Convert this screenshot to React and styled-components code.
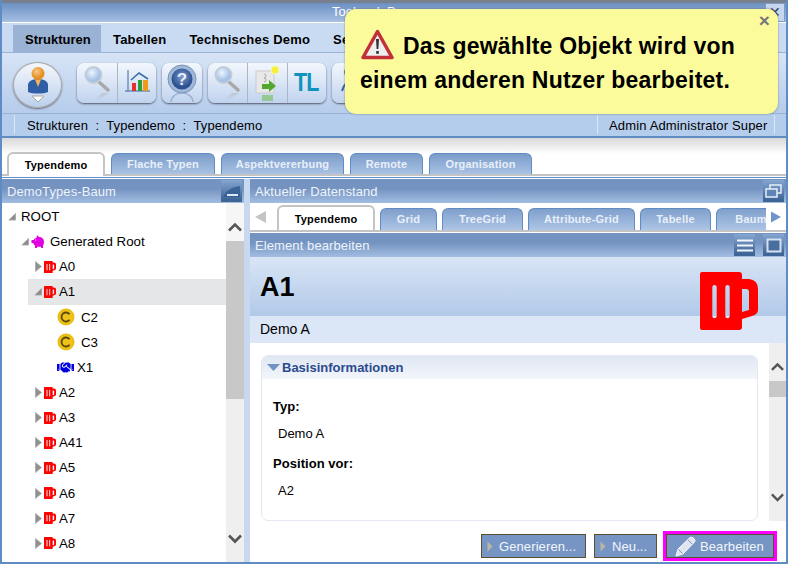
import React from 'react';
import styled, { createGlobalStyle } from 'styled-components';
import { FaHandshake } from 'react-icons/fa';

const Global = createGlobalStyle`
  html, body { margin: 0; padding: 0; background: #fff; overflow: hidden; }
  * { box-sizing: border-box; }
  body { font-family: "Liberation Sans", Arial, sans-serif; color: #000; }
`;

const Win = styled.div`
  position: relative; width: 788px; height: 564px; overflow: hidden;
  display: flex; flex-direction: column; background: #fff;
  border-left: 2px solid #5f8cc4; border-right: 2px solid #5f8cc4; border-bottom: 2px solid #5f8cc4;
`;
const TitleBar = styled.div`
  height: 22px; flex: none; border-top: 3px solid #77808c; border-bottom: 1px solid #a9c0e2;
  background: linear-gradient(#6c90c2, #a3bde2); color: #fff; font-size: 13px; line-height: 17px;
  display: flex; justify-content: space-between; padding-left: 330px;
`;
const CloseBox = styled.div`
  width: 20px; height: 19px; margin-right: 1px; background: #c5d6ee; border: 1px solid #7f9cc4;
  color: #445; font-size: 14px; text-align: center; line-height: 16px;
`;
const MenuBar = styled.div`
  height: 31px; flex: none; padding: 2px 0 0 11px; display: flex; font-size: 13px; font-weight: 700;
  background: #c9dbf3; border-top: 1px solid #fff; border-bottom: 1px solid #9ab3d6;
`;
const MenuItem = styled.div`
  height: 27px; padding: 1px 11px 0 12px; line-height: 27px; white-space: nowrap; letter-spacing: .2px;
  ${p => (p.$active ? 'width: 88px; letter-spacing: 0; background: #9ab2d4;' : '')}
`;
const Toolbar = styled.div`
  height: 61px; flex: none; display: flex; align-items: flex-start; gap: 6px; padding: 9px 0 0 11px;
  background: linear-gradient(#d7e4f6, #b5cceb); border-bottom: 1px solid #9ab3d6;
`;
const UserBtn = styled.div`
  width: 49px; height: 46px; margin-right: 9px; border-radius: 50%;
  background: linear-gradient(#f4f7fc, #bcd0ec); border: 1px solid #a8a8a8; box-shadow: 0 1px 2px #667;
  display: flex; align-items: center; justify-content: center;
`;
const BtnGroup = styled.div`
  height: 40px; margin-top: 1px; display: flex; border-radius: 7px; overflow: hidden;
  background: linear-gradient(#f3f7fd, #c0d3ee); box-shadow: 0 1px 2px 0 #556;
`;
const ToolBtn = styled.div`
  width: 39.5px; display: flex; align-items: center; justify-content: center;
  & + & { border-left: 1px solid #aab6c6; }
`;
const TL = styled.span`
  display: block; font-size: 25px; font-weight: 700; color: #0e94bd; letter-spacing: -1px; line-height: 1;
  transform: scaleX(.86); margin-top: -2px;
`;
const StatusBar = styled.div`
  height: 24px; flex: none; display: flex; font-size: 13px;
  background: #b5cdec; border-bottom: 2px solid #5f8cc4; padding-left: 12px;
`;
const Crumbs = styled.div`
  flex: 1; border-left: 1px solid #dbe6f6; padding-left: 12px; white-space: pre; letter-spacing: .1px;
  height: 19px; margin-top: 1px; line-height: 21px;
`;
const UserName = styled.div`
  width: 178px; height: 19px; margin: 1px 11px 0 0; line-height: 21px; padding-left: 11px; white-space: nowrap; letter-spacing: .15px;
  border-left: 1px solid #dbe6f6; border-right: 1px solid #dbe6f6;
`;
const TabZone = styled.div`
  height: 38px; flex: none; display: flex; align-items: flex-end; padding-left: 5px; gap: 6px;
  background: linear-gradient(#d8d8d8, #fff 16px); border-bottom: 2px solid #c4c4c4;
  margin-bottom: 2px; box-shadow: 0 1px 0 #fff, 0 2px 0 #5f8cc4;
`;
const MainTab = styled.div`
  flex: none; width: ${p => p.$w}px; height: ${p => (p.$active ? 24 : 21)}px; margin-bottom: ${p => (p.$active ? -2 : 0)}px;
  border-radius: 6px 6px 0 0; text-align: center; font-size: 11px; font-weight: 700; letter-spacing: .2px;
  line-height: ${p => (p.$active ? 22 : 20)}px; white-space: nowrap; overflow: hidden;
  ${p => (p.$active
    ? 'background:#fff;color:#000;border:2px solid #c4c4c4;border-bottom:0;'
    : 'background:linear-gradient(#7b9cc9,#a9c2e4);color:#e8eff9;border:1px solid #5f8cc4;border-bottom:0;')}
`;
const Body = styled.div`
  flex: 1; min-height: 0; display: flex; margin-top: 1px;
`;
const LeftPane = styled.div`
  width: 242px; flex: none; display: flex; flex-direction: column;
`;
const Splitter = styled.div`
  width: 6px; flex: none; background: #c8d8ee;
`;
const RightPane = styled.div`
  flex: 1; min-width: 0; display: flex; flex-direction: column;
`;
const PaneHead = styled.div`
  height: 24px; flex: none; display: flex; align-items: center; gap: 8px; padding: 0 ${p => p.$pr || 1}px 0 5px;
  color: #eef3fb; font-size: 13px; letter-spacing: .1px;
  background: linear-gradient(#7493c0 40%, #a3bde2);
`;
const HeadTitle = styled.div` flex: 1; `;
const HeadBtn = styled.div`
  width: 21px; height: 22px; display: flex; align-items: center; justify-content: center;
  background: linear-gradient(#86a6d2, #3f6596 90%);
`;
const TreeArea = styled.div`
  flex: 1; min-height: 0; display: flex; overflow: hidden; background: #fff;
`;
const Tree = styled.div`
  flex: 1; min-width: 0; padding-top: 1px; overflow: hidden;
`;
const Row = styled.div`
  height: 25.15px; margin-left: ${p => p.$level * 13}px; padding-left: 6px; display: flex; align-items: center;
  font-size: 13.3px; background: ${p => (p.$sel ? '#e5e6e8' : 'transparent')}; white-space: nowrap;
`;
const ArrowSlot = styled.div`
  width: 8px; margin-right: ${p => (p.$root ? 5 : 2)}px; flex: none; display: flex; justify-content: center;
`;
const IconSlot = styled.div`
  width: ${p => p.$w}px; flex: none; display: flex; align-items: center; height: 18px;
`;
const Scroll = styled.div`
  width: ${p => p.$w}px; flex: none; background: #efefef; display: flex; flex-direction: column; align-items: center; position: relative;
`;
const ScrollTop = styled.div`
  height: ${p => p.$h}px; width: 100%; flex: none; display: flex; justify-content: center; padding-top: ${p => p.$pt}px;
  background: ${p => p.$bg || 'transparent'};
`;
const Thumb = styled.div`
  width: 100%; height: ${p => p.$h}px; flex: none; background: #c8c8c8;
`;
const ScrollRest = styled.div`
  flex: 1; display: flex; align-items: flex-end; justify-content: center; padding-bottom: ${p => p.$pb}px;
`;
const TabStrip = styled.div`
  height: 29px; flex: none; display: flex; align-items: flex-end; overflow: hidden; position: relative;
  border-bottom: 2px solid #c4c4c4; margin-bottom: 1px; background: #fff;
`;
const ArrowBox = styled.div`
  width: ${p => p.$w}px; flex: none; height: 27px; align-self: flex-start; background: #fff; z-index: 1;
  display: flex; align-items: center; justify-content: ${p => p.$j}; padding: 0 5px;
`;
const InnerTabs = styled.div`
  flex: 1; min-width: 0; display: flex; gap: 5px; overflow: hidden; align-items: flex-end; height: 27px;
`;
const InnerTab = styled(MainTab)`
  height: ${p => (p.$active ? 24 : 22)}px; margin-bottom: 0;
  ${p => (p.$active ? 'height:25px;line-height:24px;' : 'background:linear-gradient(#7f9fcb,#adc5e6);line-height:21px;')}
`;
const ObjHead = styled.div`
  height: 59px; flex: none; background: linear-gradient(#d8e5f5, #b2c9e9); padding: 15px 0 0 10px; position: relative;
  font-size: 27px; font-weight: 700; line-height: 30px;
`;
const BigMug = styled.div`
  position: absolute; right: 28px; top: 15px; z-index: 1;
`;
const ObjSub = styled.div`
  height: 27px; flex: none; background: #dbe6f6; padding-left: 10px; line-height: 27px; font-size: 14px;
`;
const Content = styled.div`
  flex: 1; min-height: 0; display: flex;
`;
const ContentMain = styled.div`
  flex: 1; min-width: 0; padding: 11px 11px 0 11px; display: flex; flex-direction: column;
`;
const Card = styled.div`
  flex: 1; margin-top: 1px; border: 1px solid #e3e8f1; border-radius: 7px; overflow: hidden;
`;
const CardHead = styled.div`
  height: 23px; display: flex; align-items: center; gap: 2px; padding-left: 5px;
  background: linear-gradient(#dfe7f3, #f3f6fb); color: #2b4a8f; font-size: 13px; font-weight: 700;
`;
const CardBody = styled.div`
  padding: 20px 0 0 11px; font-size: 13px;
`;
const FieldLabel = styled.div`
  font-weight: 700; line-height: 16px; margin-bottom: 11px; letter-spacing: .05px;
`;
const FieldValue = styled.div`
  padding-left: 5px; line-height: 16px; margin-bottom: 14px; font-size: 13px;
`;
const Footer = styled.div`
  height: 41px; flex: none; display: flex; justify-content: flex-end; align-items: flex-start; padding: 10px 9px 0 0;
`;
const ActionBtn = styled.div`
  height: 24px; margin-top: 3px; margin-right: ${p => p.$mr || 0}px; width: ${p => p.$w}px; padding-left: 5px;
  display: flex; align-items: center; gap: 6px; background: #7795c4; border: 1px solid #5a4f30; color: #f2f5fb;
  font-size: 13px; letter-spacing: .1px; white-space: nowrap;
`;
const Highlight = styled.div`
  border: 3px solid #ff00ff; height: 30px; display: flex;
`;
const HighlightBtn = styled(ActionBtn)`
  margin: 0; width: 108px; padding: 0 0 0 8px; gap: 4px;
`;
const Toast = styled.div`
  position: absolute; left: 343px; top: 9px; width: 433px; height: 105px; z-index: 5;
  background: #fcfb9b; border-radius: 11px; box-shadow: 0 0 2px 0 rgba(70,80,100,.7);
  padding: 20px 0 0 15px; font-size: 23px; font-weight: 700; line-height: 34px; letter-spacing: .22px; white-space: nowrap;
`;
const ToastClose = styled.span`
  position: absolute; right: 8px; top: 0; color: #777; font-size: 19px; line-height: 24px;
`;
const ToastIcon = styled.svg`
  vertical-align: -6px; margin: 0 9px 0 1px;
`;

const Mug = ({ size = 12 }) => (
  <svg width={size} height={size} viewBox="0 0 58 58">
    <path fillRule="evenodd" fill="#f00" d="M2 0H39a3 3 0 0 1 3 3V7H49Q58 8 58 17V38Q58 42 52 44L42 47V55a3 3 0 0 1-3 3H2a2 2 0 0 1-2-2V2a2 2 0 0 1 2-2ZM14.5 13a2.2 2.2 0 0 0-2.2 2.2V44a2.2 2.2 0 0 0 4.4 0V15.2A2.2 2.2 0 0 0 14.5 13ZM27.5 13a2.2 2.2 0 0 0-2.2 2.2V44a2.2 2.2 0 0 0 4.4 0V15.2A2.2 2.2 0 0 0 27.5 13ZM42 17V40L49 38V20Q49 17 46 17Z" />
  </svg>
);
const Pig = () => (
  <svg width="15" height="14" viewBox="0 0 15 14">
    <path fill="#e000e0" d="M6 0L8 2C11 2 13 4 13 7C13 9 12.500 10 12 10.500V13H10V11.800H6V13H4V10.500C3 10 2.500 9 2.300 8H.5V5H2.700C3 4 4 3.300 5.500 2.700Z" />
    <circle cx="4.600" cy="5" r=".6" fill="#fff" />
  </svg>
);
const Coin = () => (
  <svg width="18" height="18" viewBox="0 0 18 18">
    <circle cx="9" cy="9" r="8.500" fill="#e8bd12" />
    <circle cx="9" cy="9" r="7" fill="#eec21a" />
    <path d="M12.600 6.300A4.500 4.500 0 1 0 12.600 11.700" fill="none" stroke="#5a4a0c" strokeWidth="1.800" />
  </svg>
);
const Tri = ({ open }) => open ? (
  <svg width="9" height="9" viewBox="0 0 9 9"><path d="M8.500 1V8.500H1Z" fill="#8c8c8c" /><path d="M8.500 1V8.500H1Z" fill="none" stroke="#a8a8a8" /></svg>
) : (
  <svg width="7" height="11" viewBox="0 0 7 11"><path d="M.5.500L6.500 5.500L.5 10.500Z" fill="#8f8f8f" stroke="#b0b0b0" /></svg>
);
const Chev = ({ up, w = 14 }) => (
  <svg width={w} height={w * 0.72} viewBox="0 0 14 10">
    <path d={up ? 'M1 8.500L7 2.500L13 8.500' : 'M1 1.500L7 7.500L13 1.500'} fill="none" stroke="#555" strokeWidth="2.600" />
  </svg>
);

const Lens = () => (
  <svg width="30" height="36" viewBox="0 0 30 36">
    <defs>
      <radialGradient id="lg" cx=".4" cy=".35"><stop offset="0" stopColor="#eef5fd" /><stop offset="1" stopColor="#a3c1e6" /></radialGradient>
      <linearGradient id="lr" x1="0" y1="0" x2="0" y2="1"><stop offset="0" stopColor="#aaa" stopOpacity=".45" /><stop offset="1" stopColor="#aaa" stopOpacity="0" /></linearGradient>
    </defs>
    <path d="M17 17L26 25" stroke="#a8a8a8" strokeWidth="3.500" strokeLinecap="round" />
    <circle cx="11.500" cy="10" r="8" fill="url(#lg)" stroke="#c2ccd8" strokeWidth="2" />
    <path d="M17 35L27 28H20L12 35Z" fill="url(#lr)" />
  </svg>
);
const Chart = () => (
  <svg width="28" height="28" viewBox="0 0 28 28">
    <path d="M5 1V23M2 22H27" stroke="#6a8cbf" strokeWidth="1.400" fill="none" />
    <path d="M8 11L16 4L25 10" stroke="#3a6ea8" strokeWidth="1.600" fill="none" />
    <rect x="9" y="14" width="4" height="8" fill="#e5322c" />
    <rect x="15" y="11" width="4" height="11" fill="#2c9f3a" />
    <rect x="20" y="11" width="5" height="11" fill="#f09a1a" />
  </svg>
);
const Help = () => (
  <svg width="32" height="38" viewBox="0 0 32 38">
    <defs><radialGradient id="hg" cx=".5" cy=".4"><stop offset="0" stopColor="#7d9ccf" /><stop offset="1" stopColor="#2c4f8e" /></radialGradient></defs>
    <circle cx="16" cy="15" r="14" fill="#9fb8da" stroke="#7d93b6" />
    <circle cx="16" cy="15" r="10.500" fill="url(#hg)" />
    <text x="16" y="21" textAnchor="middle" fontFamily="Liberation Sans" fontWeight="700" fontSize="17" fill="#e8eef8">?</text>
    <path d="M5 38A11 9 0 0 1 27 38" fill="none" stroke="#8aa4cb" strokeWidth="1.500" opacity=".7" />
  </svg>
);
const DocArrow = () => (
  <svg width="28" height="36" viewBox="0 0 28 36">
    <rect x="3" y="6" width="18" height="22" fill="#e8e8e8" stroke="#ccc" />
    <path d="M11 9a2 2 0 1 1 0 4a2 2 0 1 1 0 4" fill="none" stroke="#aaa" />
    <path d="M9 19H16V15L23 21L16 27V24H9Z" fill="#52a82e" />
    <circle cx="22" cy="5" r="4" fill="#f8ee3c" stroke="#f6f8b0" />
    <path d="M9 30H20V36H9Z" fill="#6cbb4a" opacity=".55" />
  </svg>
);
const Hier = () => (
  <svg width="28" height="36" viewBox="0 0 28 36">
    <circle cx="10" cy="7" r="3.500" fill="none" stroke="#888" strokeWidth="1.500" />
    <path d="M4 26C6 16 16 14 22 8" fill="none" stroke="#3a62a8" strokeWidth="2" />
  </svg>
);
const User = () => (
  <svg width="30" height="38" viewBox="0 0 30 38">
    <defs><radialGradient id="ug" cx=".4" cy=".35"><stop offset="0" stopColor="#f8c987" /><stop offset="1" stopColor="#e48f20" /></radialGradient></defs>
    <path d="M5 26V19C5 15 10 13 15 13C20 13 25 15 25 19V26C20 28 10 28 5 26Z" fill="#2f5ea5" />
    <path d="M12 13.500L15 21L18 13.500Z" fill="#f2b15b" />
    <circle cx="15" cy="7.500" r="6.500" fill="url(#ug)" />
    <path d="M9 30H21L15 36Z" fill="#fff" stroke="#aaa" />
  </svg>
);

const Warn = () => (
  <ToastIcon width="33" height="31" viewBox="0 0 33 31">
    <path d="M16.500 2.500L31 28.500H2Z" fill="#eeeeee" stroke="#c2303a" strokeWidth="3.500" strokeLinejoin="round" />
    <path d="M15 10H18L17.400 20H15.600Z" fill="#333" />
    <rect x="15.200" y="22" width="2.600" height="2.800" fill="#333" />
  </ToastIcon>
);

const Minimize = () => (
  <svg width="19" height="18" viewBox="0 0 19 18"><path d="M1 15C5 7 11 5 18 4V15Z" fill="#2e5a92" opacity=".75" /><rect x="5" y="12" width="11" height="2" fill="#dfe8f5" /></svg>
);
const Restore = () => (
  <svg width="17" height="14" viewBox="0 0 17 14"><rect x="5" y="1" width="11" height="8" fill="none" stroke="#e8eef8" strokeWidth="1.500" /><rect x="1" y="5" width="11" height="8" fill="#5e83b5" stroke="#e8eef8" strokeWidth="1.500" /></svg>
);
const Lines = () => (
  <svg width="16" height="13" viewBox="0 0 16 13"><path d="M0 1.500H16M0 6.500H16M0 11.500H16" stroke="#f2f5fb" strokeWidth="2" /></svg>
);
const Maxi = () => (
  <svg width="16" height="15" viewBox="0 0 16 15"><rect x="1.500" y="1.500" width="13" height="12" fill="#4a6f9f" stroke="#d5e0f0" strokeWidth="2" /></svg>
);
const Pencil = () => (
  <svg width="21" height="21" viewBox="0 0 21 21">
    <path d="M1 20L3 13L15 1.500Q17 .5 19 2.500T19.500 6L8 18Z" fill="#dfe6f2" stroke="#f5f7fb" />
    <path d="M3.500 13.500L7.500 17.500M13 4L17 8" stroke="#7f97bd" />
  </svg>
);
const BtnTri = () => (
  <svg width="6" height="11" viewBox="0 0 6 11"><path d="M.5.500L5.500 5.500L.5 10.500Z" fill="#bdb6a2" /></svg>
);

const treeData = [
  { k: 'root', t: 'ROOT', l: 0, open: true, root: true },
  { k: 'gen', t: 'Generated Root', l: 1, open: true, icon: <Pig />, w: 19 },
  { k: 'a0', t: 'A0', l: 2, icon: <Mug />, w: 15 },
  { k: 'a1', t: 'A1', l: 2, open: true, sel: true, icon: <Mug />, w: 15 },
  { k: 'c2', t: 'C2', l: 3, noArrow: true, icon: <Coin />, w: 24 },
  { k: 'c3', t: 'C3', l: 3, noArrow: true, icon: <Coin />, w: 24 },
  { k: 'x1', t: 'X1', l: 3, noArrow: true, icon: <FaHandshake size={17} color="#0000e0" />, w: 20 },
  ...['A2', 'A3', 'A41', 'A5', 'A6', 'A7', 'A8'].map(t => ({ k: t, t, l: 2, icon: <Mug />, w: 15 })),
  { k: 'more', t: '', l: 2, icon: <Mug />, w: 15 },
];

export default function App() {
  return (
    <>
      <Global />
      <Win>
        <TitleBar><span>Toolpack Demo</span><CloseBox>✕</CloseBox></TitleBar>
        <MenuBar>
          <MenuItem $active>Strukturen</MenuItem>
          <MenuItem>Tabellen</MenuItem>
          <MenuItem>Technisches Demo</MenuItem>
          <MenuItem>Service</MenuItem>
        </MenuBar>
        <Toolbar>
          <UserBtn><User /></UserBtn>
          <BtnGroup><ToolBtn><Lens /></ToolBtn><ToolBtn><Chart /></ToolBtn></BtnGroup>
          <BtnGroup><ToolBtn><Help /></ToolBtn></BtnGroup>
          <BtnGroup><ToolBtn><Lens /></ToolBtn><ToolBtn><DocArrow /></ToolBtn><ToolBtn><TL>TL</TL></ToolBtn></BtnGroup>
          <BtnGroup><ToolBtn><Hier /></ToolBtn></BtnGroup>
        </Toolbar>
        <StatusBar>
          <Crumbs>{'Strukturen  :  Typendemo  :  Typendemo'}</Crumbs>
          <UserName>Admin Administrator Super</UserName>
        </StatusBar>
        <TabZone>
          <MainTab $w={98} $active>Typendemo</MainTab>
          <MainTab $w={104}>Flache Typen</MainTab>
          <MainTab $w={123}>Aspektvererbung</MainTab>
          <MainTab $w={73}>Remote</MainTab>
          <MainTab $w={103}>Organisation</MainTab>
        </TabZone>
        <Body>
          <LeftPane>
            <PaneHead $pr={2}><HeadTitle>DemoTypes-Baum</HeadTitle><HeadBtn><Minimize /></HeadBtn></PaneHead>
            <TreeArea>
              <Tree>
                {treeData.map(n => (
                  <Row key={n.k} $level={n.l} $sel={n.sel}>
                    {n.noArrow ? <ArrowSlot /> : <ArrowSlot $root={n.root}><Tri open={n.open} /></ArrowSlot>}
                    {n.icon && <IconSlot $w={n.w}>{n.icon}</IconSlot>}
                    {n.t}
                  </Row>
                ))}
              </Tree>
              <Scroll $w={18}>
                <ScrollTop $h={38} $pt={19} $bg="#f6f6f6"><Chev up /></ScrollTop>
                <Thumb $h={158} />
                <ScrollRest $pb={18}><Chev /></ScrollRest>
              </Scroll>
            </TreeArea>
          </LeftPane>
          <Splitter />
          <RightPane>
            <PaneHead $pr={2}><HeadTitle>Aktueller Datenstand</HeadTitle><HeadBtn><Restore /></HeadBtn></PaneHead>
            <TabStrip>
              <ArrowBox $w={27} $j="flex-start"><svg width="12" height="12" viewBox="0 0 12 12"><path d="M11 0V12L0 6Z" fill="#c4c4c4" /></svg></ArrowBox>
              <InnerTabs>
                <InnerTab $w={98} $active>Typendemo</InnerTab>
                <InnerTab $w={57}>Grid</InnerTab>
                <InnerTab $w={81}>TreeGrid</InnerTab>
                <InnerTab $w={107}>Attribute-Grid</InnerTab>
                <InnerTab $w={71}>Tabelle</InnerTab>
                <InnerTab $w={70}>Baum</InnerTab>
              </InnerTabs>
              <ArrowBox $w={20} $j="flex-end"><svg width="11" height="12" viewBox="0 0 11 12"><path d="M0 0V12L11 6Z" fill="#6f95c8" /></svg></ArrowBox>
            </TabStrip>
            <PaneHead $pr={2}>
              <HeadTitle>Element bearbeiten</HeadTitle>
              <HeadBtn><Lines /></HeadBtn>
              <HeadBtn><Maxi /></HeadBtn>
            </PaneHead>
            <ObjHead>A1<BigMug><Mug size={58} /></BigMug></ObjHead>
            <ObjSub>Demo A</ObjSub>
            <Content>
              <ContentMain>
                <Card>
                  <CardHead>
                    <svg width="13" height="7" viewBox="0 0 13 7"><path d="M0 0H13L6.500 7Z" fill="#6f93c6" /></svg>
                    Basisinformationen
                  </CardHead>
                  <CardBody>
                    <FieldLabel>Typ:</FieldLabel>
                    <FieldValue>Demo A</FieldValue>
                    <FieldLabel>Position vor:</FieldLabel>
                    <FieldValue>A2</FieldValue>
                  </CardBody>
                </Card>
              </ContentMain>
              <Scroll $w={17}>
                <ScrollTop $h={38} $pt={19}><Chev up w={13} /></ScrollTop>
                <Thumb $h={16} />
                <ScrollRest $pb={19}><Chev w={13} /></ScrollRest>
              </Scroll>
            </Content>
            <Footer>
              <ActionBtn $w={105} $mr={8}><BtnTri />Generieren...</ActionBtn>
              <ActionBtn $w={63} $mr={6}><BtnTri />Neu...</ActionBtn>
              <Highlight><HighlightBtn><Pencil />Bearbeiten</HighlightBtn></Highlight>
            </Footer>
          </RightPane>
        </Body>
        <Toast>
          <ToastClose>×</ToastClose>
          <Warn />Das gewählte Objekt wird von<br />einem anderen Nutzer bearbeitet.
        </Toast>
      </Win>
    </>
  );
}
